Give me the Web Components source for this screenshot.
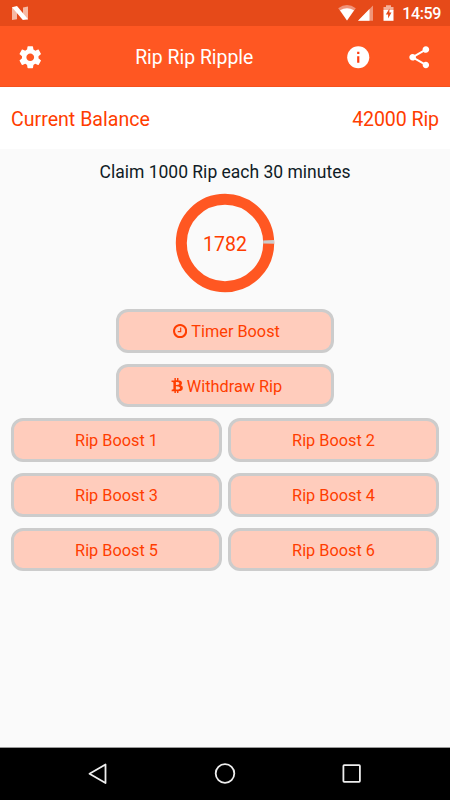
<!DOCTYPE html>
<html lang="en">
<head>
<meta charset="utf-8">
<title>Rip Rip Ripple</title>
<style>
html,body{margin:0;height:100%;overflow:hidden}
body{font-family:Roboto,"Liberation Sans",sans-serif;background:#fafafa}
</style>
</head>
<body>
<ripple-app></ripple-app>
<script>
function define(name, html) {
  const template = document.createElement('template');
  template.innerHTML = html;
  customElements.define(name, class extends HTMLElement {
    constructor() {
      super();
      this.attachShadow({ mode: 'open' }).appendChild(template.content.cloneNode(true));
    }
  });
}

define('status-bar', `
<style>
:host{display:flex;align-items:center;box-sizing:border-box;height:26px;padding:0 9px 0 11px;background:#e64a19;color:#fff}
svg{display:block;flex:none}
.n{margin-right:auto}
.wifi{margin-right:2px}
.cell{margin-right:9px}
.bat{margin-right:8px}
span{font-size:16px;line-height:26px;font-weight:500;letter-spacing:-.35px;padding-top:2px}
</style>
<svg class="n" width="18" height="26" viewBox="0 0 18 26"><path d="M1 7.2l5 .5v11.500L1 20zM17 6.500l-5 1v11.500l5 .500z" fill="#f6b9a3"/><path d="M1 7.200L6 6l11 13.300-5.200.700z" fill="#fff"/></svg>
<svg class="wifi" width="18" height="26" viewBox="0 0 18 26"><path d="M.2 8.300Q9 1.800 17.800 8.300L9 20.500z" fill="#f0937a"/><path d="M2 10.300Q9 6 16 10.300L9 20.500z" fill="#fff"/></svg>
<svg class="cell" width="16" height="26" viewBox="0 0 16 26"><path d="M15 5.500v15.200H0z" fill="#f09579"/><path d="M11.500 9v11.700H0z" fill="#fff"/></svg>
<svg class="bat" width="11" height="26" viewBox="0 0 11 26"><path d="M.5 7H3V5.300h5V7h2.500v3.500H.5z" fill="#f4b09a"/><path d="M.5 10h10v10.800H.5z" fill="#fff"/><path d="M6.500 8.500L2.800 14.500h2.300v4l3.400-6H6.300z" fill="#e64a19"/></svg>
<span>14:59</span>`);

define('app-bar', `
<style>
:host{display:grid;grid-template-columns:1fr auto 1fr;align-items:center;box-sizing:border-box;height:61px;padding:2px 17.500px 0 17px;background:#ff5722;color:#fff;border-bottom:1px solid #f4511e}
h1{margin:0;font-size:19.400px;font-weight:400;line-height:24px;margin-left:-61px;padding-top:2px}
svg{display:block}
.right{display:flex;justify-content:flex-end;gap:35px}
</style>
<svg width="26.500" height="26.500" viewBox="0 0 24 24" fill="#fff"><path d="M19.430 12.980c.04-.32.07-.64.07-.98s-.03-.66-.07-.98l2.110-1.650c.19-.15.240-.42.120-.64l-2-3.460c-.12-.22-.39-.3-.61-.22l-2.490 1c-.52-.4-1.080-.73-1.690-.98l-.38-2.650C14.460 2.180 14.250 2 14 2h-4c-.25 0-.46.18-.49.42l-.38 2.650c-.61.25-1.170.59-1.690.98l-2.490-1c-.23-.09-.49 0-.61.22l-2 3.460c-.13.22-.07.49.12.64l2.110 1.650c-.04.32-.07.65-.07.98s.03.66.07.98l-2.110 1.650c-.19.15-.24.42-.12.64l2 3.460c.12.22.39.3.61.22l2.490-1c.52.4 1.080.73 1.690.98l.38 2.650c.03.24.24.42.49.42h4c.25 0 .46-.18.49-.42l.38-2.650c.61-.25 1.170-.59 1.690-.98l2.490 1c.23.09.49 0 .61-.22l2-3.460c.12-.22.07-.49-.12-.64l-2.110-1.650zM12 15.500c-1.930 0-3.500-1.570-3.500-3.500s1.570-3.500 3.500-3.500 3.500 1.570 3.500 3.500-1.570 3.500-3.500 3.500z"/></svg>
<h1><slot></slot></h1>
<div class="right">
<svg width="26.500" height="26.500" viewBox="0 0 24 24" fill="#fff"><circle cx="12" cy="12" r="10"/><path d="M11 7h2v2h-2zM11 11h2v6h-2z" fill="#ff3d10"/></svg>
<svg width="26.500" height="26.500" viewBox="0 0 24 24" fill="#fff"><path d="M18 16.080c-.76 0-1.440.3-1.960.77L8.910 12.700c.05-.23.09-.46.09-.7s-.04-.47-.09-.7l7.050-4.110c.54.5 1.250.81 2.040.81 1.660 0 3-1.340 3-3s-1.340-3-3-3-3 1.340-3 3c0 .24.04.47.09.7L8.040 9.810C7.500 9.310 6.790 9 6 9c-1.660 0-3 1.340-3 3s1.340 3 3 3c.79 0 1.500-.31 2.040-.81l7.120 4.160c-.05.21-.08.43-.08.65 0 1.610 1.310 2.920 2.920 2.920s2.920-1.310 2.920-2.920-1.310-2.920-2.920-2.920z"/></svg>
</div>`);

define('balance-row', `
<style>
:host{display:flex;justify-content:space-between;align-items:center;height:62px;padding:3px 11px 0;box-sizing:border-box;background:#fff;color:#ff3d00;font-size:19.600px;line-height:24px}
::slotted([slot=amount]){letter-spacing:-.1px}
</style><slot name="label"></slot><slot name="amount"></slot>`);

define('countdown-ring', `
<style>
:host{display:grid;place-items:center;width:100px;height:100px;color:#ff3d00;font-size:19.500px;line-height:24px}
svg,span{grid-area:1/1}
span{padding-top:3px}
</style>
<svg width="100" height="100" viewBox="0 0 100 100" fill="none" stroke-width="11"><circle cx="50" cy="50" r="43.700" stroke="#ff5722"/><path d="M93.640 47.300A43.700 43.700 0 0 1 93.700 50.700" stroke="#ccc"/></svg>
<span><slot></slot></span>`);

define('rip-button', `
<style>
:host{display:flex;align-items:center;justify-content:center;gap:4px;box-sizing:border-box;height:43.600px;border:3px solid #ccc;border-radius:12px;background:#ffccbc;color:#ff3d00;font-size:16.300px;line-height:20px}
span{padding-top:2px}
</style><slot name="icon"></slot><span><slot></slot></span>`);

define('nav-bar', `
<style>
:host{display:flex;justify-content:center;gap:103px;align-items:center;height:53px;background:#000;border-top:1px solid #999;box-sizing:border-box}
svg{display:block}
</style>
<svg width="24" height="24" viewBox="0 0 24 24" fill="none" stroke="#eee" stroke-width="1.800" stroke-linejoin="round"><path d="M19.500 2.500v18.500L3.500 11.800z"/></svg>
<svg width="24" height="24" viewBox="0 0 24 24" fill="none" stroke="#eee" stroke-width="1.800"><circle cx="12" cy="11.500" r="9.300"/></svg>
<svg width="24" height="24" viewBox="0 0 24 24" fill="none" stroke="#eee" stroke-width="1.800"><rect x="3.400" y="3.200" width="16.500" height="16.700" rx=".8"/></svg>`);

define('ripple-app', `
<style>
:host{display:flex;flex-direction:column;width:450px;height:800px;background:#fafafa}
main{flex:1;display:flex;flex-direction:column;align-items:center;padding:12px 11px 0}
p{margin:0;color:#101c26;font-size:17.500px;line-height:22px}
countdown-ring{margin:10.300px 0 15.800px}
.stack{display:grid;gap:11.100px;width:218.500px}
.stack rip-button{padding-left:3px}
.grid{display:grid;grid-template-columns:1fr 1fr;gap:11.100px 6px;align-self:stretch;margin-top:11.100px}
rip-button svg{display:block}
</style>
<status-bar></status-bar>
<app-bar>Rip Rip Ripple</app-bar>
<balance-row><span slot="label">Current Balance</span><span slot="amount">42000 Rip</span></balance-row>
<main>
<p>Claim 1000 Rip each 30 minutes</p>
<countdown-ring>1782</countdown-ring>
<div class="stack">
<rip-button><svg slot="icon" width="14.200" height="14.200" viewBox="0 128 1536 1536" fill="#ff3d00"><path d="M896 544v448q0 14-9 23t-23 9h-320q-14 0-23-9t-9-23v-64q0-14 9-23t23-9h224v-352q0-14 9-23t23-9h64q14 0 23 9t9 23zm416 352q0-148-73-273t-198-198-273-73-273 73-198 198-73 273 73 273 198 198 273 73 273-73 198-198 73-273zm224 0q0 209-103 385.500t-279.500 279.500-385.500 103-385.500-103-279.500-279.500-103-385.500 103-385.500 279.500-279.500 385.500-103 385.500 103 279.500 279.500 103 385.500z"/></svg>Timer Boost</rip-button>
<rip-button><svg slot="icon" width="12" height="14.500" viewBox="0 128 1280 1536" fill="#ff3d00"><path d="M1167 640q18 182-131 258 117 28 175 103t45 214q-7 71-32.500 125t-64.500 89-97 58.500-121.500 34.500-145.500 15v255h-154v-251q-80 0-122-1v252h-154v-255q-18 0-54-.5t-55-.5h-200l31-183h111q50 0 58-51v-402h16q-6-1-16-1v-287q-13-68-89-68h-111v-164l212 1q64 0 97-1v-252h154v247q82-2 122-2v-245h154v252q79 7 140 22.500t113 45 82.500 78 36.500 114.500zm-215 545q0-36-15-64t-37-46-57.500-30.500-65.500-18.500-74-9-69-3-64.500 1-47.500 1v338q8 0 37 .5t48 .5 53-1.500 58.500-4 57-8.500 55.500-14 47.500-21 39.500-30 24.500-40 9.500-51zm-71-476q0-33-12.500-58.500t-30.500-42-48-28-55-16.500-61.500-8-58-2.500-54 1-39.500.5v307q5 0 34.500.5t46.500 0 50-2 55-5.500 51.500-11 48.500-18.500 37-27 27-38.500 9-51z"/></svg>Withdraw Rip</rip-button>
</div>
<div class="grid">
<rip-button>Rip Boost 1</rip-button><rip-button>Rip Boost 2</rip-button>
<rip-button>Rip Boost 3</rip-button><rip-button>Rip Boost 4</rip-button>
<rip-button>Rip Boost 5</rip-button><rip-button>Rip Boost 6</rip-button>
</div>
</main>
<nav-bar></nav-bar>`);
</script>
</body>
</html>
